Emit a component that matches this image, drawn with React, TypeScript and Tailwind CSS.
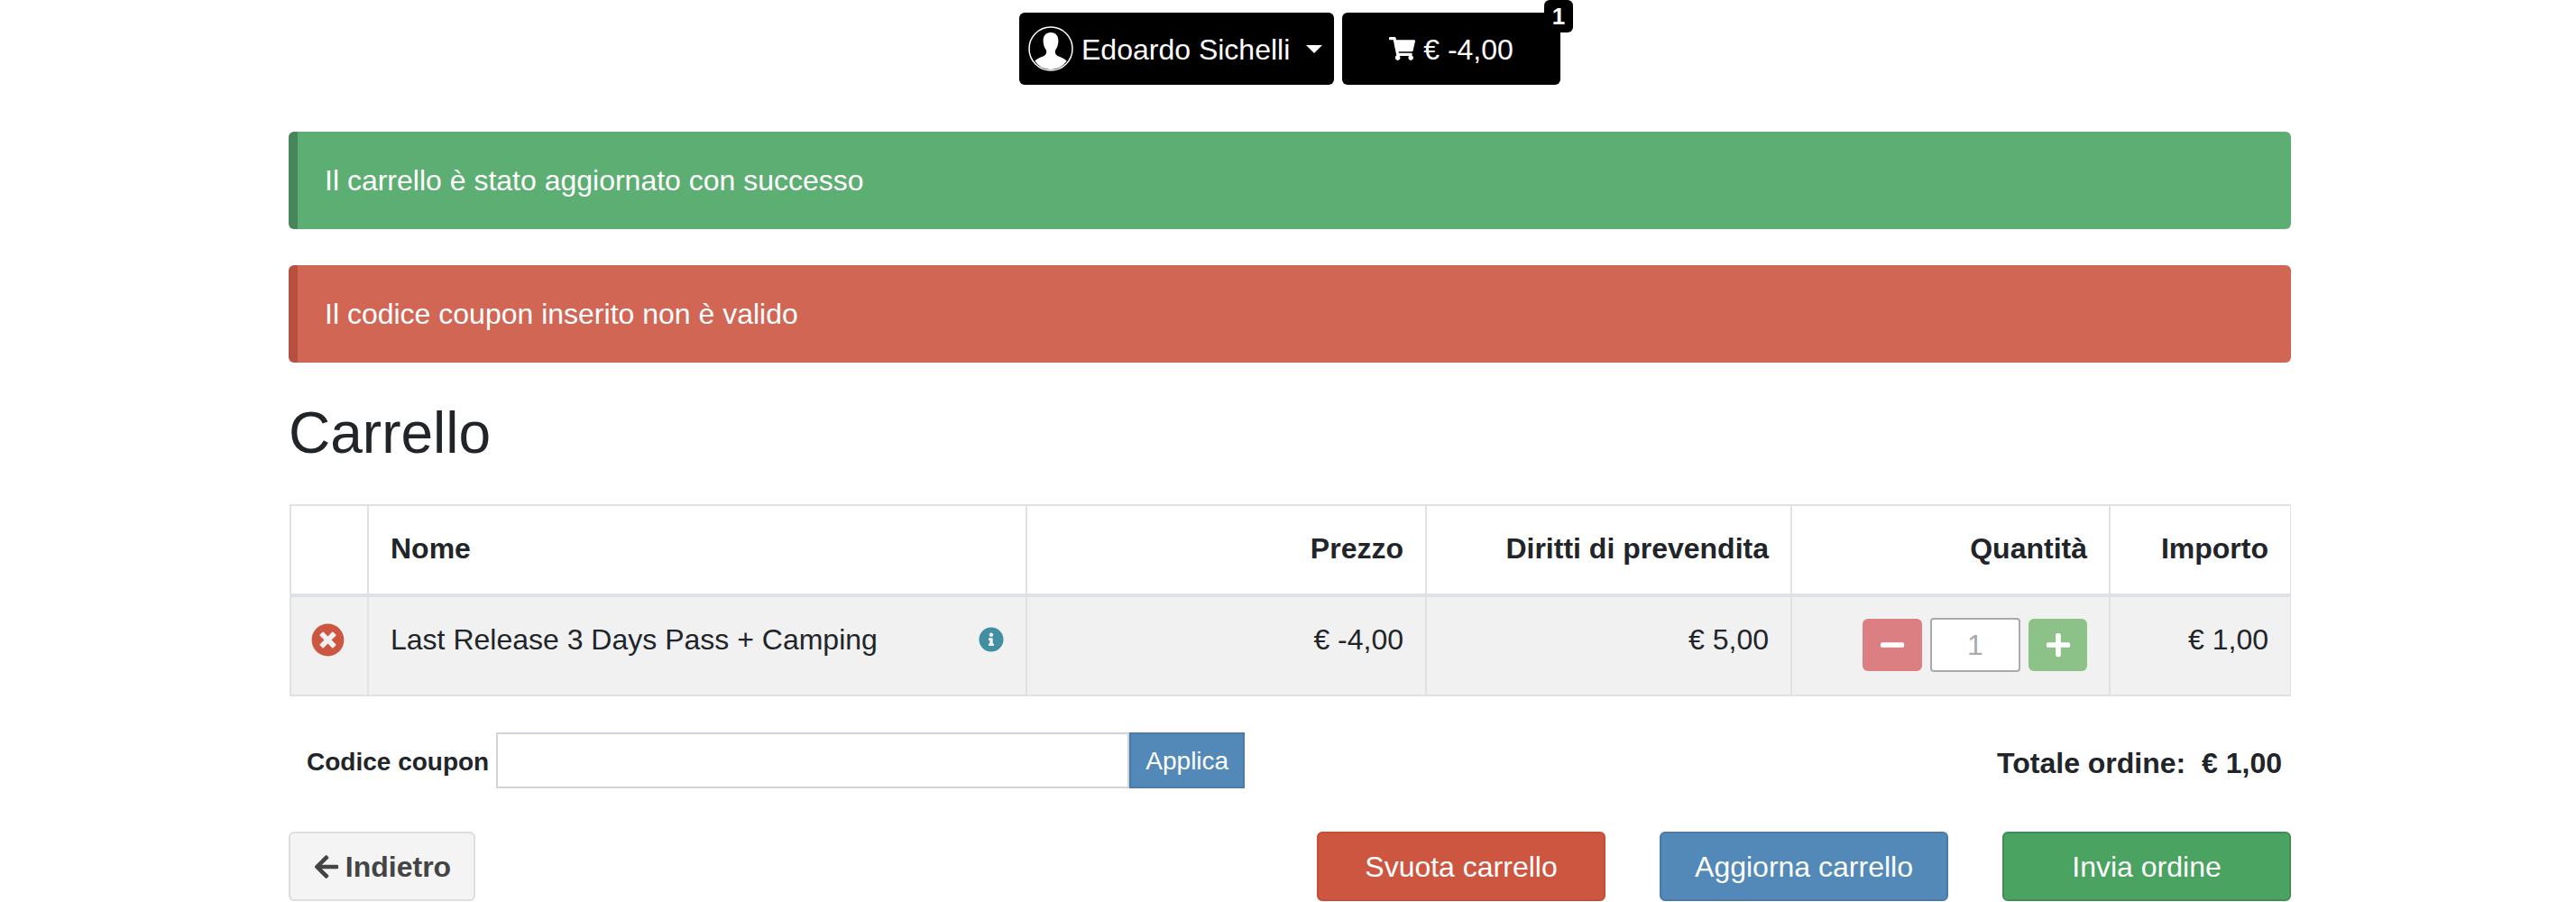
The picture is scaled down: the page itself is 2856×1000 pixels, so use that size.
import React from 'react';
import { FaArrowLeft, FaInfoCircle, FaMinus, FaPlus, FaShoppingCart, FaTimesCircle } from 'react-icons/fa';

const Avatar = () => (
  <svg viewBox="0 0 50 50" className="h-[50px] w-[50px] shrink-0" fill="none">
    <ellipse cx="25" cy="25" rx="24" ry="24" stroke="#fff" strokeWidth="1.5" />
    <path
      fill="#fff"
      d="M25 7c-5.6 0-8.6 4-8.4 9.6.1 3.6 1.2 7 2.9 9.3.7 1 .8 2.2.6 3.6-.3 2-1.6 3-3.8 3.9-3.5 1.4-7 2.6-8.9 5.2C11 44.500 17.500 48 25 48s14-3.500 17.600-9.400c-1.900-2.600-5.400-3.800-8.900-5.200-2.200-.9-3.500-1.900-3.800-3.900-.2-1.400-.1-2.600.6-3.600 1.700-2.300 2.800-5.700 2.900-9.300C33.600 11 30.600 7 25 7z"
    />
  </svg>
);

const Alert = ({ tone, text }: { tone: 'success' | 'danger'; text: string }) => (
  <div
    className={
      tone === 'success'
        ? 'flex h-[108px] items-center rounded-md border-l-[10px] border-[#47855a] bg-[#5dae72] pl-[30px] text-[32px] text-white'
        : 'flex h-[108px] items-center rounded-md border-l-[10px] border-[#b8503f] bg-[#d26655] pl-[30px] text-[32px] text-white'
    }
  >
    {text}
  </div>
);

const headCell = 'border-2 border-b-4 border-[#dee2e6] px-6 pb-[3px] text-right align-middle text-[32px] font-bold text-[#212529]';
const bodyCell = 'border-2 border-[#dee2e6] px-6 pt-[23px] text-right align-top text-[32px] leading-[48px] text-[#212529]';
const actionButton = 'flex h-[77px] w-[320px] items-center justify-center rounded-md border-2 text-[32px] text-white';

export default function App() {
  return (
    <div className="ml-[320px] h-[1000px] w-[2220px] overflow-hidden font-['Liberation_Sans',Arial,sans-serif]">
      <div className="flex gap-[9px] pl-[810px] pt-[14px]">
        <button className="flex h-20 w-[349px] items-center rounded-md bg-black pl-[10px] text-[32px] text-white">
          <Avatar />
          <span className="ml-[9px] pt-[2px]">Edoardo Sichelli</span>
          <span className="ml-[18px] h-0 w-0 border-x-[9px] border-t-[9px] border-x-transparent border-t-white" />
        </button>
        <button className="relative flex h-20 w-[242px] items-center justify-center gap-[9px] rounded-md bg-black text-[32px] text-white">
          <FaShoppingCart className="h-[26px] w-[29px]" />
          <span className="pt-[2px]">€ -4,00</span>
          <span className="absolute right-[-14px] top-[-14px] flex h-9 w-8 items-center justify-center rounded-md bg-black text-[26px] font-bold">
            1
          </span>
        </button>
      </div>

      <div className="mt-[52px] flex flex-col gap-10">
        <Alert tone="success" text="Il carrello è stato aggiornato con successo" />
        <Alert tone="danger" text="Il codice coupon inserito non è valido" />
      </div>

      <h2 className="mt-10 text-[64px] leading-[77px] text-[#212529]">Carrello</h2>

      <table className="ml-px mt-10 w-[2218px] table-fixed border-collapse">
        <colgroup>
          <col className="w-[86px]" />
          <col className="w-[730px]" />
          <col className="w-[443px]" />
          <col className="w-[405px]" />
          <col className="w-[353px]" />
          <col className="w-[201px]" />
        </colgroup>
        <thead>
          <tr className="h-[100px]">
            <th className={headCell}></th>
            <th className={`${headCell} !text-left`}>Nome</th>
            <th className={headCell}>Prezzo</th>
            <th className={headCell}>Diritti di prevendita</th>
            <th className={headCell}>Quantità</th>
            <th className={headCell}>Importo</th>
          </tr>
        </thead>
        <tbody>
          <tr className="bg-[#f1f1f1]">
            <td className="border-2 border-[#dee2e6] pr-[3px] pt-[29px] align-top">
              <FaTimesCircle className="mx-auto h-[37px] w-[37px] text-[#cd5641]" />
            </td>
            <td className={`${bodyCell} !text-left`}>
              <div className="flex items-center justify-between">
                <span>Last Release 3 Days Pass + Camping</span>
                <FaInfoCircle className="h-[28px] w-[28px] text-[#428ea3]" />
              </div>
            </td>
            <td className={bodyCell}>€ -4,00</td>
            <td className={bodyCell}>€ 5,00</td>
            <td className={`${bodyCell} pb-[25px]`}>
              <div className="flex items-center justify-end gap-[9px]">
                <button className="flex h-[58px] w-[66px] items-center justify-center rounded-md bg-[#db7f83] text-white">
                  <FaMinus className="h-[30px] w-[30px]" />
                </button>
                <input
                  readOnly
                  value="1"
                  className="h-[60px] w-[100px] rounded border-2 border-[#aaaaaa] bg-white text-center text-[32px] text-[#aaaaaa]"
                />
                <button className="flex h-[58px] w-[65px] items-center justify-center rounded-md bg-[#8cc288] text-white">
                  <FaPlus className="h-[30px] w-[30px]" />
                </button>
              </div>
            </td>
            <td className={bodyCell}>€ 1,00</td>
          </tr>
        </tbody>
      </table>

      <div className="mt-[40px] flex h-[62px] items-center justify-between pl-5 pr-[10px]">
        <div className="flex items-center">
          <label className="pt-[3px] text-[28px] font-bold text-[#212529]">Codice coupon</label>
          <input className="ml-2 h-[62px] w-[702px] border-2 border-[#ced4da] bg-white" />
          <button className="h-[62px] w-[128px] border-2 border-[#4a7ba6] bg-[#5289b8] pt-[2px] text-[28px] text-white">Applica</button>
        </div>
        <div className="pt-[6px] text-[32px] font-bold text-[#212529]">Totale ordine:&nbsp; € 1,00</div>
      </div>

      <div className="mt-[48px] flex items-center">
        <button className="flex h-[77px] w-[207px] items-center justify-center gap-[6px] rounded-md border-2 border-[#dddddd] bg-[#f4f4f4] text-[32px] font-bold text-[#444444]">
          <FaArrowLeft className="h-[30px] w-[30px]" />
          Indietro
        </button>
        <div className="ml-auto flex gap-[60px]">
          <button className={`${actionButton} border-[#c44d38] bg-[#cd5641]`}>Svuota carrello</button>
          <button className={`${actionButton} border-[#4a7ba6] bg-[#5289b8]`}>Aggiorna carrello</button>
          <button className={`${actionButton} border-[#3f8d54] bg-[#4aa361]`}>Invia ordine</button>
        </div>
      </div>
    </div>
  );
}
